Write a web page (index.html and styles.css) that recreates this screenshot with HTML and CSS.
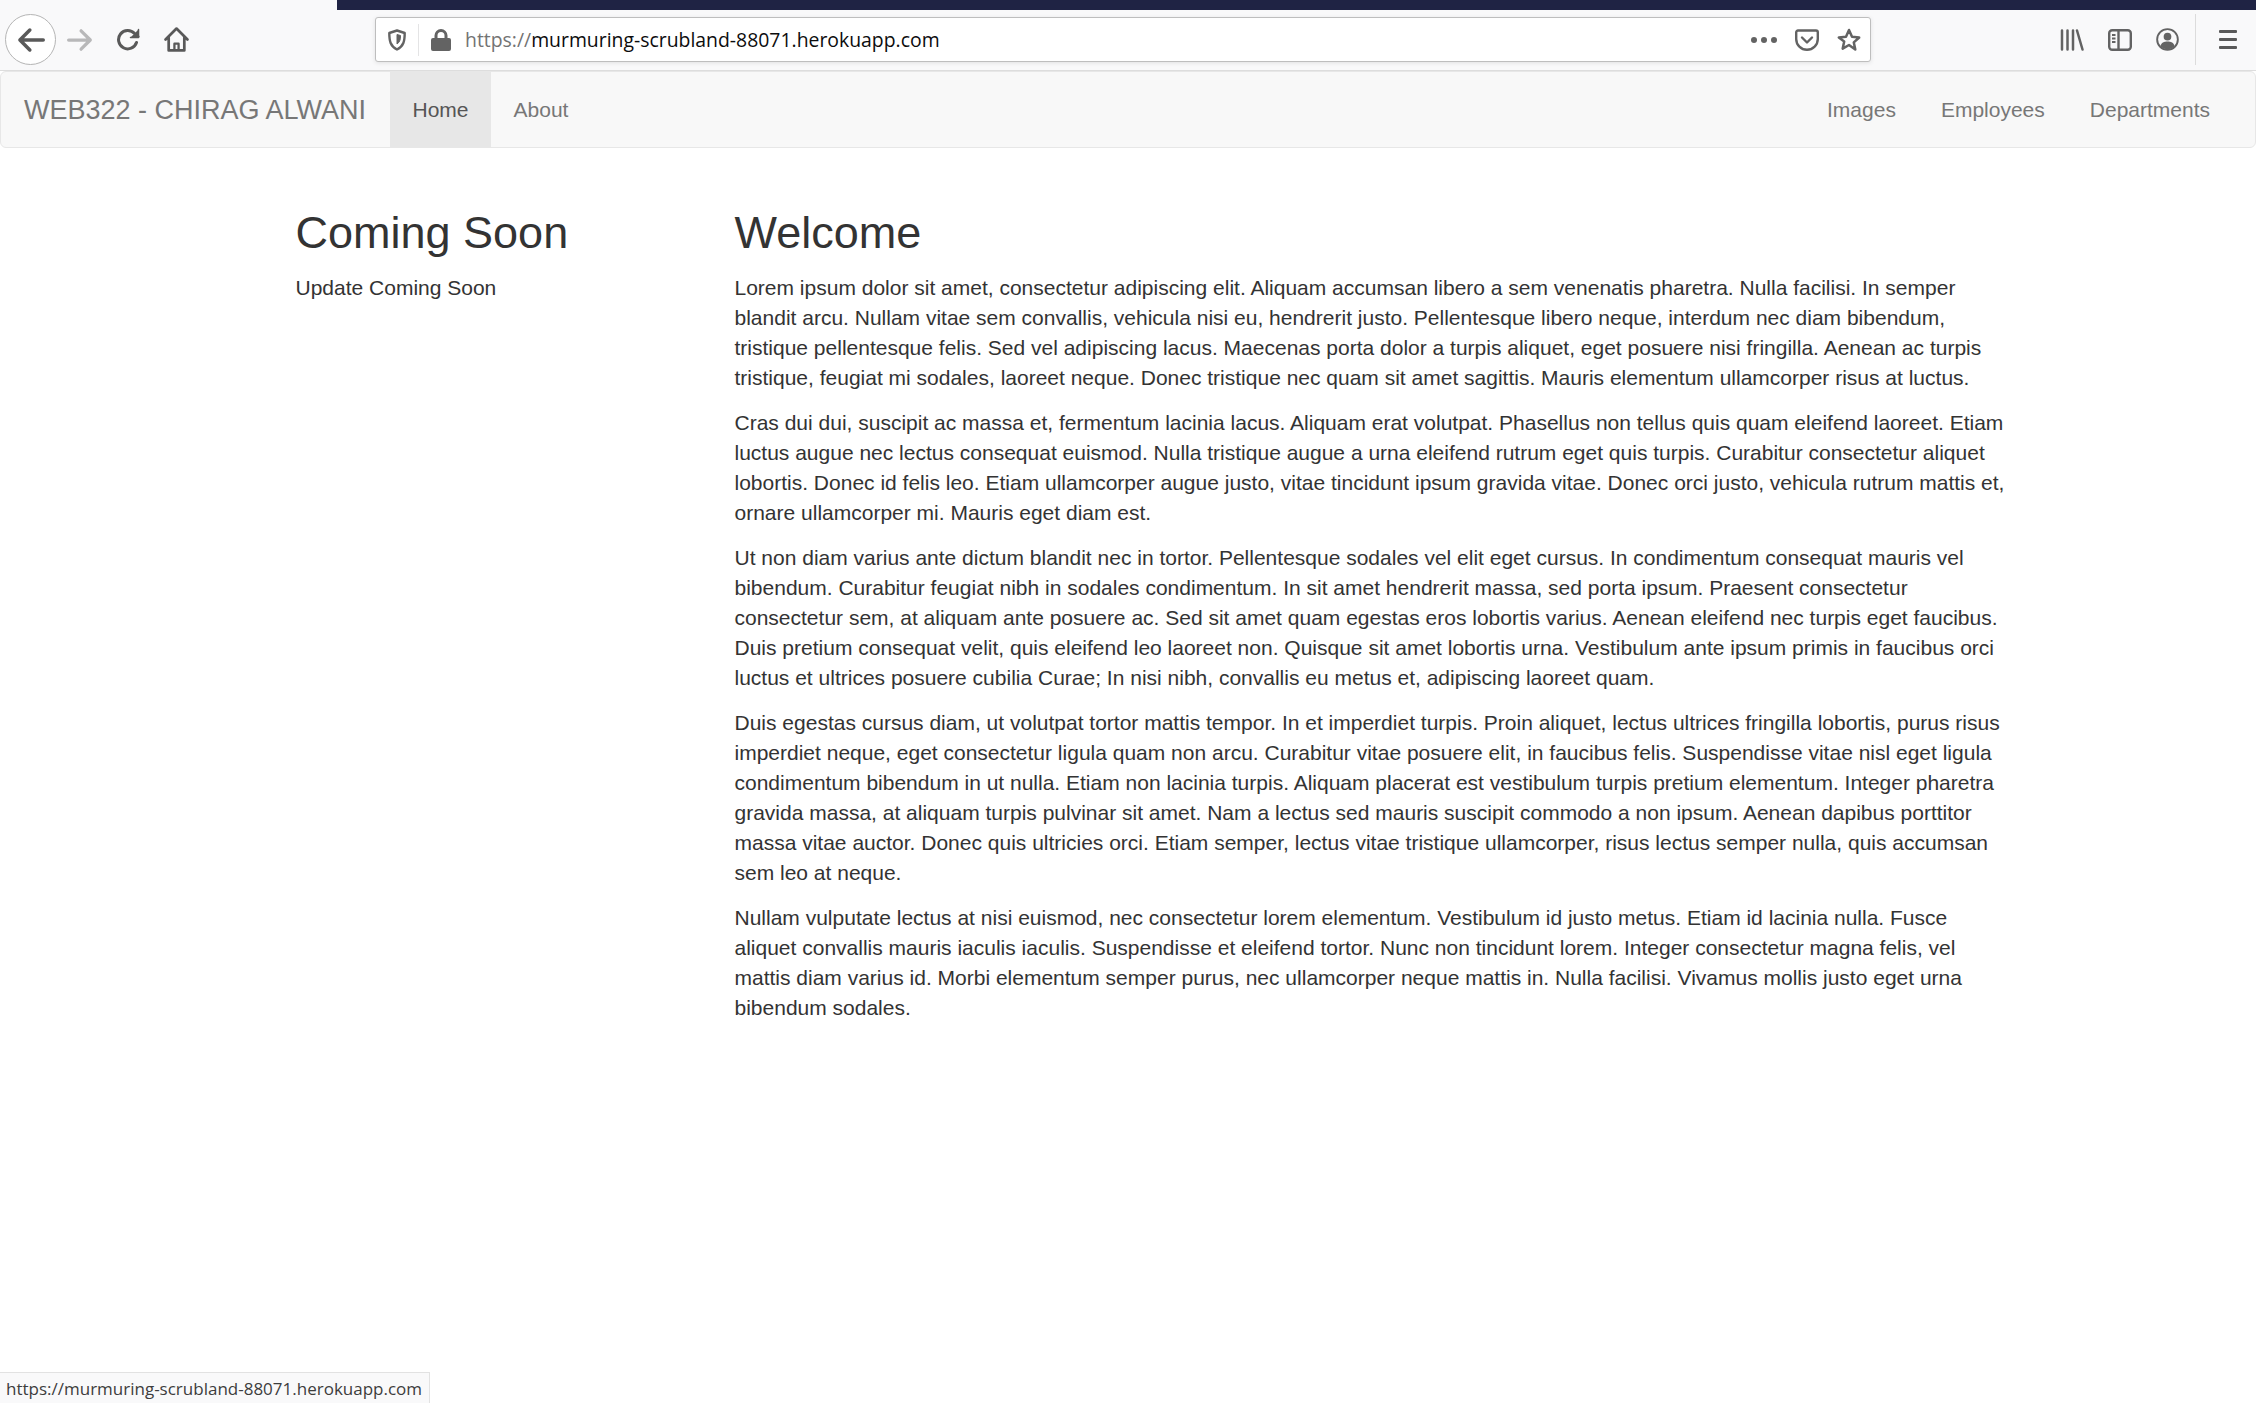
FILE: index.html
```html
<!DOCTYPE html>
<html lang="en">

<head>
    <title>WEB322 - Chirag Alwani</title>
    <meta name="viewport" content="initial-scale=1, width=device-width">
    <link rel="stylesheet" href="styles.css">
</head>

<body>
    <div class="titlebar">
        <div class="titlebar-fill"></div>
    </div>

    <div class="toolbar">
        <button class="tool tool-back" aria-label="Back">
            <svg viewBox="0 0 24 24" width="28" height="28" fill="none" stroke="#595959" stroke-width="3" stroke-linecap="round" stroke-linejoin="round"><path d="M22.5 12H2.5M11 3.5 2.5 12l8.5 8.5"/></svg>
        </button>
        <button class="tool tool-forward" aria-label="Forward">
            <svg viewBox="0 0 24 24" width="26" height="26" fill="none" stroke="#b8b8b9" stroke-width="3" stroke-linecap="round" stroke-linejoin="round"><path d="M1.5 12h20M13 3.5l8.5 8.5-8.5 8.5"/></svg>
        </button>
        <button class="tool tool-reload" aria-label="Reload">
            <svg viewBox="0 0 24 24" width="24" height="24" fill="none" stroke="#595959" stroke-width="3" stroke-linecap="round" stroke-linejoin="round"><path d="M20.5 14.5A9.2 9.2 0 1 1 18.6 5.5L22 8.5"/><path d="M22.5 1.5v8h-8" fill="#595959" stroke-width="1.5"/></svg>
        </button>
        <button class="tool tool-home" aria-label="Home">
            <svg viewBox="0 0 24 24" width="25" height="25" fill="none" stroke="#595959" stroke-width="2.6" stroke-linejoin="round" stroke-linecap="round"><path d="M1.5 12 12 1.5 22.5 12M4.5 10v12.500h15V10"/><path d="M10 22v-6h4v6" stroke-width="2.200"/></svg>
        </button>

        <div class="urlbar">
            <svg class="url-shield" viewBox="0 0 18 22" width="18" height="22" fill="none" stroke="#636363" stroke-width="2.400" stroke-linejoin="round"><path d="M9 1.500 16.700 4c0 8 -1 13-7.700 16.500C2.300 17 1.300 12 1.300 4Z"/><path d="M9 5.500 12.500 6.500c0 4-.6 6.500-3.500 8.500Z" fill="#636363" stroke-width="1"/></svg>
            <span class="url-sep"></span>
            <svg class="url-lock" viewBox="0 0 20 22" width="20" height="22"><path d="M3.500 9V6.500a6.500 6.500 0 0 1 13 0V9h1.500a2 2 0 0 1 2 2v9a2 2 0 0 1-2 2H2a2 2 0 0 1-2-2v-9a2 2 0 0 1 2-2Zm3 0h7V6.500a3.500 3.500 0 0 0-7 0Z" fill="#636363"/></svg>
            <span class="url-text"><span class="url-scheme">https://</span>murmuring-scrubland-88071.herokuapp.com</span>
            <span class="url-dots"><i></i><i></i><i></i></span>
            <svg class="url-pocket" viewBox="0 0 24 22" width="24" height="22" fill="none" stroke="#636363" stroke-width="2.400" stroke-linecap="round" stroke-linejoin="round"><path d="M3 1.500h18a1.800 1.800 0 0 1 1.800 1.800V10A10.800 10.800 0 0 1 1.200 10V3.300A1.800 1.800 0 0 1 3 1.500Z"/><path d="M7 8.500l5 5 5-5"/></svg>
            <svg class="url-star" viewBox="0 0 24 24" width="24" height="24" fill="none" stroke="#636363" stroke-width="2.500" stroke-linejoin="round"><path d="M12 2l3 6.700 7.200.8-5.400 4.900 1.500 7.200L12 17l-6.300 3.600 1.500-7.200L1.800 9.500 9 8.700Z"/></svg>
        </div>

        <div class="toolbar-right">
            <svg viewBox="0 0 24 22" width="24" height="22" stroke="#636363" stroke-width="2.500" stroke-linecap="round" fill="none"><path d="M2 1.500v19M7.500 1.500v19M13 1.500v19M17 1.500l5.500 19"/></svg>
            <svg viewBox="0 0 24 22" width="24" height="22" fill="none" stroke="#636363" stroke-width="2.400"><rect x="1.200" y="1.200" width="21.600" height="19.600" rx="3"/><path d="M10.500 1v20"/><path d="M4 6h3.500M4 9.500h3.500M4 13h3.500" stroke-width="1.800"/></svg>
            <svg viewBox="0 0 24 24" width="23" height="23" fill="none" stroke="#636363" stroke-width="2"><circle cx="12" cy="12" r="10.800"/><circle cx="12" cy="9" r="4" fill="#636363" stroke="none"/><path d="M4.500 19c1-4 4-5 7.500-5s6.500 1 7.500 5c-2 2-4.500 3-7.500 3s-5.500-1-7.500-3Z" fill="#636363" stroke="none"/></svg>
            <span class="toolbar-sep"></span>
            <span class="menu-icon"><i></i><i></i><i></i></span>
        </div>
    </div>

    <nav class="navbar">
        <a class="brand" href="#">WEB322 - CHIRAG ALWANI</a>
        <ul class="nav-links">
            <li class="active"><a href="#">Home</a></li>
            <li><a href="#">About</a></li>
        </ul>
        <ul class="nav-links nav-right">
            <li><a href="#">Images</a></li>
            <li><a href="#">Employees</a></li>
            <li><a href="#">Departments</a></li>
        </ul>
    </nav>

    <div class="content">
        <aside>
            <h2>Coming Soon</h2>
            <p>Update Coming Soon</p>
        </aside>
        <main>
            <h2>Welcome</h2>
            <p>Lorem ipsum dolor sit amet, consectetur adipiscing elit. Aliquam accumsan libero a sem venenatis pharetra. Nulla facilisi. In semper blandit arcu. Nullam vitae sem convallis, vehicula nisi eu, hendrerit justo. Pellentesque libero neque, interdum nec diam bibendum, tristique pellentesque felis. Sed vel adipiscing lacus. Maecenas porta dolor a turpis aliquet, eget posuere nisi fringilla. Aenean ac turpis tristique, feugiat mi sodales, laoreet neque. Donec tristique nec quam sit amet sagittis. Mauris elementum ullamcorper risus at luctus.</p>
            <p>Cras dui dui, suscipit ac massa et, fermentum lacinia lacus. Aliquam erat volutpat. Phasellus non tellus quis quam eleifend laoreet. Etiam luctus augue nec lectus consequat euismod. Nulla tristique augue a urna eleifend rutrum eget quis turpis. Curabitur consectetur aliquet lobortis. Donec id felis leo. Etiam ullamcorper augue justo, vitae tincidunt ipsum gravida vitae. Donec orci justo, vehicula rutrum mattis et, ornare ullamcorper mi. Mauris eget diam est.</p>
            <p>Ut non diam varius ante dictum blandit nec in tortor. Pellentesque sodales vel elit eget cursus. In condimentum consequat mauris vel bibendum. Curabitur feugiat nibh in sodales condimentum. In sit amet hendrerit massa, sed porta ipsum. Praesent consectetur consectetur sem, at aliquam ante posuere ac. Sed sit amet quam egestas eros lobortis varius. Aenean eleifend nec turpis eget faucibus. Duis pretium consequat velit, quis eleifend leo laoreet non. Quisque sit amet lobortis urna. Vestibulum ante ipsum primis in faucibus orci luctus et ultrices posuere cubilia Curae; In nisi nibh, convallis eu metus et, adipiscing laoreet quam.</p>
            <p>Duis egestas cursus diam, ut volutpat tortor mattis tempor. In et imperdiet turpis. Proin aliquet, lectus ultrices fringilla lobortis, purus risus imperdiet neque, eget consectetur ligula quam non arcu. Curabitur vitae posuere elit, in faucibus felis. Suspendisse vitae nisl eget ligula condimentum bibendum in ut nulla. Etiam non lacinia turpis. Aliquam placerat est vestibulum turpis pretium elementum. Integer pharetra gravida massa, at aliquam turpis pulvinar sit amet. Nam a lectus sed mauris suscipit commodo a non ipsum. Aenean dapibus porttitor massa vitae auctor. Donec quis ultricies orci. Etiam semper, lectus vitae tristique ullamcorper, risus lectus semper nulla, quis accumsan sem leo at neque.</p>
            <p>Nullam vulputate lectus at nisi euismod, nec consectetur lorem elementum. Vestibulum id justo metus. Etiam id lacinia nulla. Fusce aliquet convallis mauris iaculis iaculis. Suspendisse et eleifend tortor. Nunc non tincidunt lorem. Integer consectetur magna felis, vel mattis diam varius id. Morbi elementum semper purus, nec ullamcorper neque mattis in. Nulla facilisi. Vivamus mollis justo eget urna bibendum sodales.</p>
        </main>
    </div>

    <div class="statusbar">https://murmuring-scrubland-88071.herokuapp.com</div>
</body>
</html>
```

FILE: styles.css
```css
* {
    box-sizing: border-box;
}

html,
body {
    margin: 0;
    padding: 0;
    height: 1403px;
    overflow: hidden;
    background-color: #fff;
    color: #333;
    font-family: "Liberation Sans", Arial, sans-serif;
    font-size: 21px;
    line-height: 30px;
}

/* browser chrome */
.titlebar {
    height: 10px;
    padding-left: 337px;
    background-color: #f9f9fa;
}

.titlebar-fill {
    height: 100%;
    background-color: #1f2344;
}

.toolbar {
    display: flex;
    align-items: center;
    height: 61px;
    padding-left: 5px;
    padding-bottom: 1px;
    background-color: #f9f9fa;
    border-bottom: 1px solid #ddd;
}

.tool {
    display: flex;
    align-items: center;
    justify-content: center;
    flex: none;
    width: 48px;
    height: 51px;
    padding: 0;
    border: none;
    background: none;
}

.tool-back {
    width: 51px;
    border: 1px solid #b5b5b5;
    border-radius: 50%;
    background-color: #fff;
}

.urlbar {
    display: flex;
    align-items: center;
    flex: none;
    width: 1496px;
    height: 45px;
    margin-left: 175px;
    padding-left: 12px;
    padding-right: 9px;
    background-color: #fff;
    border: 1px solid #bebebe;
    border-radius: 3px;
    box-shadow: 0 1px 4px rgba(0, 0, 0, .1);
}

.url-shield {
    flex: none;
}

.url-sep {
    flex: none;
    width: 1px;
    height: 32px;
    margin: 0 12px;
    background-color: #e4e4e5;
}

.url-lock {
    flex: none;
}

.url-text {
    flex: 1;
    margin-left: 14px;
    padding-top: 1px;
    font-family: "Open Sans", sans-serif;
    font-size: 19.4px;
    color: #0c0c0d;
    white-space: nowrap;
}

.url-scheme {
    color: #737373;
}

.url-dots {
    display: flex;
    gap: 4px;
    margin-right: 18px;
}

.url-dots i {
    width: 6px;
    height: 6px;
    border-radius: 50%;
    background-color: #636363;
}

.url-pocket {
    margin-right: 18px;
}

.toolbar-right {
    display: flex;
    align-items: center;
    margin-left: 189px;
    gap: 24px;
}

.toolbar-sep {
    width: 1px;
    height: 51px;
    margin-left: -8px;
    background-color: #dcdcdc;
}

.menu-icon {
    display: flex;
    flex-direction: column;
    gap: 5px;
    width: 18px;
    margin-left: -1px;
}

.menu-icon i {
    height: 3px;
    border-radius: 1px;
    background-color: #595959;
}

/* page */
.navbar {
    display: flex;
    height: 77px;
    margin-bottom: 30px;
    background-color: #f8f8f8;
    border: 1px solid #e7e7e7;
    border-radius: 6px;
}

.navbar a {
    display: block;
    color: #777;
    text-decoration: none;
}

.brand {
    padding: 23px;
    font-size: 27px;
    width: 389px;
    white-space: nowrap;
}

.nav-links {
    display: flex;
    margin: 0;
    padding: 0;
    list-style: none;
}

.nav-links a {
    padding: 23px 22.5px;
}

.nav-links .active {
    background-color: #e7e7e7;
}

.nav-links .active a {
    color: #555;
}

.nav-right {
    margin-left: auto;
    padding-right: 22.5px;
}

.content {
    display: grid;
    grid-template-columns: 439px 1271px;
    padding-left: 295.5px;
}

h2 {
    margin: 30px 0 15px;
    font-size: 45px;
    font-weight: 400;
    line-height: 50px;
}

p {
    margin: 0 0 15px;
}

.statusbar {
    position: absolute;
    left: 0;
    bottom: 0;
    padding: 0 7px 0 6px;
    height: 31px;
    font-family: "Open Sans", sans-serif;
    font-size: 17px;
    line-height: 31px;
    color: #3d3d3d;
    background-color: #f9f9fa;
    border-top: 1px solid #e2e2e2;
    border-right: 1px solid #e2e2e2;
    white-space: nowrap;
}
```
